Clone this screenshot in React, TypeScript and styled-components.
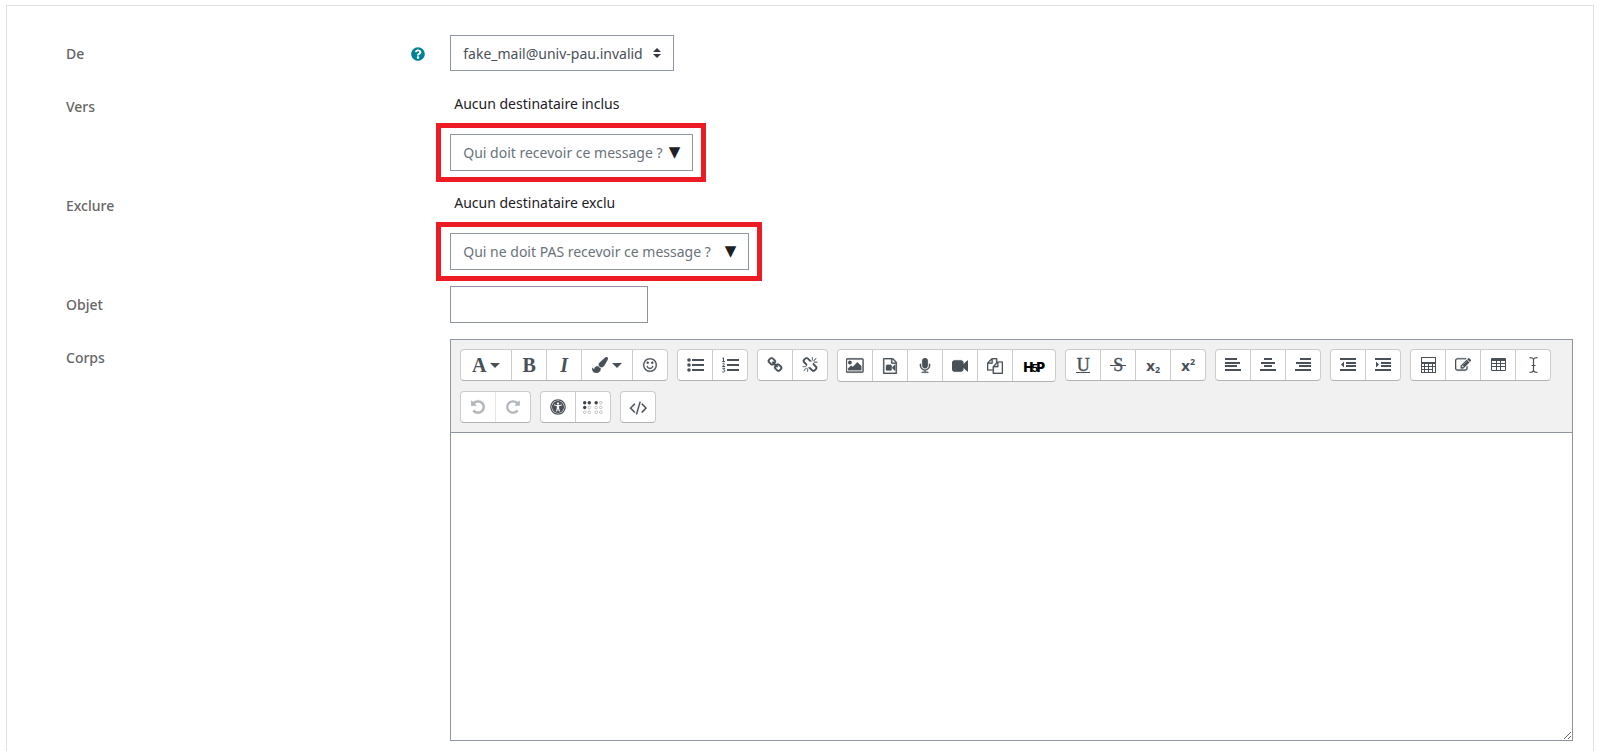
import React from "react";
import styled, { createGlobalStyle } from "styled-components";
import { FaQuestionCircle, FaUniversalAccess } from "react-icons/fa";

const GlobalStyle = createGlobalStyle`
  *, *::before, *::after { box-sizing: border-box; }
  body {
    margin: 0;
    background: #fff;
    color: #1d2125;
    font-family: "Noto Sans", "Open Sans", sans-serif;
    font-size: 14px;
    line-height: 22px;
  }
  button, input, select, textarea { font: inherit; color: inherit; margin: 0; }
`;

const Page = styled.main`
  padding: 5px 6px 0;
`;

const Panel = styled.form`
  min-height: calc(100vh - 5px);
  border: 1px solid #dee2e6;
  border-bottom: 0;
  padding: 29px 5px 10px 44px;
`;

const Row = styled.div`
  display: grid;
  grid-template-columns: 1fr 3fr;
  margin-bottom: 16px;
`;

const LabelCell = styled.div`
  display: flex;
  justify-content: space-between;
  align-items: flex-start;
  padding: 8px 10px 0 15px;
`;

const Label = styled.label`
  color: #666;
  font-weight: 500;
`;

const HelpButton = styled.button`
  display: flex;
  padding: 4px 0;
  border: 0;
  background: none;
  color: #008196;
`;

const Field = styled.div`
  min-width: 0;
  padding: 0 15px;
`;

const Control = styled.div<{ $width: number; $marked?: boolean }>`
  position: relative;
  width: ${(p) => p.$width}px;
  height: 37px;
  &::after {
    content: "";
    display: ${(p) => (p.$marked ? "block" : "none")};
    position: absolute;
    inset: -11px -13px -11px -14px;
    border: 5px solid #ed1c24;
    pointer-events: none;
  }
`;

const Select = styled.select`
  appearance: none;
  width: 100%;
  height: 36px;
  padding: 2px 12px 0;
  border: 1px solid #8f959e;
  border-radius: 0;
  background: #fff;
  color: #495057;
`;

const TextInput = styled.input`
  width: 100%;
  height: 37px;
  padding: 0 12px;
  border: 1px solid #8f959e;
  border-radius: 0;
  background: #fff;
  &::placeholder { color: #6a737b; opacity: 1; }
`;

const SelectArrows = styled.svg`
  position: absolute;
  top: 13px;
  right: 13px;
  width: 8px;
  height: 10px;
  pointer-events: none;
`;

const DownArrow = styled.span`
  position: absolute;
  top: 7px;
  right: 13px;
  font-family: "DejaVu Sans", sans-serif;
  font-size: 15px;
  pointer-events: none;
`;

const Selection = styled.p`
  height: 46px;
  margin: 0;
  padding: 5px 4px 0;
`;

const Editor = styled.div`
  border: 1px solid #8f959e;
`;

const Toolbar = styled.div`
  display: flex;
  flex-wrap: wrap;
  align-items: flex-start;
  gap: 9px;
  padding: 9px;
  background: #f1f1f1;
  border-bottom: 1px solid #8f959e;
`;

const Group = styled.div`
  display: flex;
  border: 1px solid #ccc;
  border-bottom-color: #b3b3b3;
  border-radius: 4px;
  background: #fff;
  overflow: hidden;
`;

const ToolButton = styled.button<{ $width: number; $tall?: boolean }>`
  display: flex;
  align-items: center;
  justify-content: center;
  gap: 4px;
  width: ${(p) => p.$width}px;
  height: ${(p) => (p.$tall ? 31 : 30)}px;
  padding: 0;
  border: 0;
  border-right: 1px solid #ccc;
  background: none;
  color: #495057;
  svg { flex: none; }
  &:last-child { border-right: 0; width: ${(p) => p.$width - 1}px; }
  &:disabled { color: #b2b7bb; border-color: #e6e6e6; }
`;

const Letter = styled.span<{ $italic?: boolean }>`
  font-family: "Liberation Serif", serif;
  font-size: 20px;
  font-weight: bold;
  font-style: ${(p) => (p.$italic ? "italic" : "normal")};
`;

const LinedLetter = styled.span<{ $strike?: boolean }>`
  position: relative;
  width: 16px;
  font-family: "Liberation Serif", serif;
  font-size: 18px;
  line-height: 20px;
  -webkit-text-stroke: 0.4px currentColor;
  text-align: center;
  &::after {
    content: "";
    position: absolute;
    right: ${(p) => (p.$strike ? 0 : 1)}px;
    left: ${(p) => (p.$strike ? 0 : 1)}px;
    bottom: ${(p) => (p.$strike ? 9 : 2)}px;
    height: 1px;
    background: currentColor;
  }
`;

const Script = styled.span`
  font-weight: bold;
  font-size: 15px;
  line-height: 16px;
  sub, sup { font-size: 9px; line-height: 0; }
  sub { vertical-align: -2px; }
  sup { vertical-align: 6px; }
`;

const Brand = styled.span`
  display: flex;
  align-items: baseline;
  padding-top: 3px;
  color: #000;
  font-family: Inter, sans-serif;
  font-size: 13px;
  font-weight: 900;
`;

const BrandDigit = styled.span`
  margin: 0 -2px;
  font-size: 11px;
  font-weight: 700;
`;

const Body = styled.textarea`
  display: block;
  width: 100%;
  height: 307px;
  padding: 8px;
  border: 0;
  outline: 0;
  resize: vertical;
`;

const paths = {
  brush:
    "M1615 0q70 0 122.5 46.5t52.5 116.5q0 63-45 151-332 629-465 752-97 91-218 91-126 0-216.5-92.5t-90.5-219.5q0-128 92-212l638-579q59-54 130-54zm-909 1034q39 76 106.5 130t150.5 76l1 71q4 213-129.5 347t-348.5 134q-123 0-218-46.5t-152.5-127.5-86.5-183-29-220q7 5 41 30t62 44.5 59 36.5 46 17q41 0 55-37 25-66 57.5-112.5t69.5-76 88-47.5 103-25.5 125-10.5z",
  smile:
    "M1262 1075q-37 121-138 195t-228 74-228-74-138-195q-8-25 4-48.5t38-31.5q25-8 48.5 4t31.5 38q25 80 92.5 129.5t151.5 49.5 151.5-49.5 92.5-129.5q8-26 32-38t49-4 37 31.5 4 48.5zm-494-435q0 53-37.5 90.5t-90.5 37.5-90.5-37.5-37.5-90.5 37.5-90.5 90.5-37.5 90.5 37.5 37.5 90.5zm512 0q0 53-37.5 90.5t-90.5 37.5-90.5-37.5-37.5-90.5 37.5-90.5 90.5-37.5 90.5 37.5 37.5 90.5zm256 256q0-130-51-248.5t-136.5-204-204-136.5-248.5-51-248.5 51-204 136.5-136.5 204-51 248.5 51 248.5 136.5 204 204 136.5 248.5 51 248.5-51 204-136.5 136.5-204 51-248.5zm128 0q0 209-103 385.5t-279.5 279.5-385.5 103-385.5-103-279.5-279.5-103-385.5 103-385.5 279.5-279.5 385.5-103 385.5 103 279.5 279.5 103 385.5z",
  link:
    "M1520 1216q0-40-28-68l-208-208q-28-28-68-28-42 0-72 32 3 3 19 18.5t21.5 21.5 15 19 13 25.5 3.5 27.5q0 40-28 68t-68 28q-15 0-27.5-3.5t-25.5-13-19-15-21.5-21.5-18.5-19q-33 31-33 73 0 40 28 68l206 207q27 27 68 27 40 0 68-26l147-146q28-28 28-67zm-703-705q0-40-28-68l-206-207q-28-28-68-28-39 0-68 27l-147 146q-28 28-28 67 0 40 28 68l208 208q27 27 68 27 42 0 72-31-3-3-19-18.5t-21.5-21.5-15-19-13-25.5-3.5-27.5q0-40 28-68t68-28q15 0 27.5 3.5t25.5 13 19 15 21.5 21.5 18.5 19q33-31 33-73zm895 705q0 120-85 203l-147 146q-83 83-203 83-121 0-204-85l-206-207q-83-83-83-203 0-123 88-209l-88-88q-86 88-208 88-120 0-204-84l-208-208q-84-84-84-204t85-203l147-146q83-83 203-83 121 0 204 85l206 207q83 83 83 203 0 123-88 209l88 88q86-88 208-88 120 0 204 84l208 208q84 84 84 204z",
  unlink:
    "M503 1271l-256 256q-10 9-23 9-12 0-23-9-9-10-9-23t9-23l256-256q10-9 23-9t23 9q9 10 9 23t-9 23zm169 41v320q0 14-9 23t-23 9-23-9-9-23v-320q0-14 9-23t23-9 23 9 9 23zm-224-224q0 14-9 23t-23 9h-320q-14 0-23-9t-9-23 9-23 23-9h320q14 0 23 9t9 23zm1264 128q0 120-85 203l-147 146q-83 83-203 83-121 0-204-85l-334-335q-21-21-42-56l239-18 273 274q28 28 68 27.5t68-27.5l147-146q28-28 28-67 0-40-28-68l-274-275 18-239q35 21 56 42l336 336q84 86 84 204zm-617-724l-239 18-273-274q-28-28-68-28-39 0-68 27l-147 146q-28 28-28 67 0 40 28 68l274 274-18 240q-35-21-56-42l-336-336q-84-86-84-204 0-120 85-203l147-146q83-83 203-83 121 0 204 85l334 335q21 21 42 56zm633 84q0 14-9 23t-23 9h-320q-14 0-23-9t-9-23 9-23 23-9h320q14 0 23 9t9 23zm-544-544v320q0 14-9 23t-23 9-23-9-9-23v-320q0-14 9-23t23-9 23 9 9 23zm407 151l-256 256q-11 9-23 9t-23-9q-9-10-9-23t9-23l256-256q10-9 23-9t23 9q9 10 9 23t-9 23z",
  image:
    "M576 576q0 80-56 136t-136 56-136-56-56-136 56-136 136-56 136 56 56 136zm1024 384v448h-1408v-192l320-320 160 160 512-512zm96-704h-1600q-13 0-22.5 9.5t-9.5 22.5v1216q0 13 9.5 22.5t22.5 9.5h1600q13 0 22.5-9.5t9.5-22.5v-1216q0-13-9.5-22.5t-22.5-9.5zm160 32v1216q0 66-47 113t-113 47h-1600q-66 0-113-47t-47-113v-1216q0-66 47-113t113-47h1600q66 0 113 47t47 113z",
  media:
    "M1596 380q28 28 48 76t20 88v1152q0 40-28 68t-68 28h-1344q-40 0-68-28t-28-68v-1600q0-40 28-68t68-28h896q40 0 88 20t76 48zm-444-244v376h376q-10-29-22-41l-313-313q-12-12-41-22zm384 1528v-1024h-416q-40 0-68-28t-28-68v-416h-768v1536h1280zm-576-896q52 0 90 38t38 90v384q0 52-38 90t-90 38h-384q-52 0-90-38t-38-90v-384q0-52 38-90t90-38h384zm492 2q20 8 20 30v576q0 22-20 30-8 2-12 2-14 0-23-9l-265-266v-90l265-266q9-9 23-9 4 0 12 2z",
  microphone:
    "M1472 704v128q0 221-147.5 384.5t-364.5 187.5v132h256q26 0 45 19t19 45-19 45-45 19h-640q-26 0-45-19t-19-45 19-45 45-19h256v-132q-217-24-364.5-187.5t-147.5-384.5v-128q0-26 19-45t45-19 45 19 19 45v128q0 185 131.5 316.5t316.5 131.5 316.5-131.5 131.5-316.5v-128q0-26 19-45t45-19 45 19 19 45zm-256-384v512q0 132-94 226t-226 94-226-94-94-226v-512q0-132 94-226t226-94 226 94 94 226z",
  video:
    "M1792 352v1088q0 42-39 59-13 5-25 5-27 0-45-19l-403-403v166q0 119-84.5 203.5t-203.5 84.5h-704q-119 0-203.5-84.5t-84.5-203.5v-704q0-119 84.5-203.5t203.5-84.5h704q119 0 203.5 84.5t84.5 203.5v165l403-402q18-19 45-19 12 0 25 5 39 17 39 59z",
  files:
    "M1696 384q40 0 68 28t28 68v1216q0 40-28 68t-68 28h-960q-40 0-68-28t-28-68v-288h-544q-40 0-68-28t-28-68v-672q0-40 20-88t48-76l408-408q28-28 76-48t88-20h416q40 0 68 28t28 68v328q68-40 128-40h416zm-544 213l-299 299h299v-299zm-640-384l-299 299h299v-299zm196 647l316-316v-416h-384v416q0 40-28 68t-68 28h-416v640h512v-256q0-40 20-88t48-76zm956 804v-1152h-384v416q0 40-28 68t-68 28h-416v640h896z",
  edit:
    "M888 1184l116-116-152-152-116 116v56h96v96h56zm440-720q-16-16-33 1l-350 350q-17 17-1 33t33-1l350-350q17-17 1-33zm80 594v190q0 119-84.5 203.5t-203.5 84.5h-832q-119 0-203.5-84.5t-84.5-203.5v-832q0-119 84.5-203.5t203.5-84.5h832q63 0 117 25 15 7 18 23 3 17-9 29l-49 49q-14 14-32 8-23-6-45-6h-832q-66 0-113 47t-47 113v832q0 66 47 113t113 47h832q66 0 113-47t47-113v-126q0-13 9-22l64-64q15-15 35-7t20 29zm-96-738l288 288-672 672h-288v-288zm444 132l-92 92-288-288 92-92q28-28 68-28t68 28l152 152q28 28 28 68t-28 68z",
  undo:
    "M1664 896q0 156-61 298t-164 245-245 164-298 61q-172 0-327-72.5t-264-204.5q-7-10-6.5-22.5t8.5-20.5l137-138q10-9 25-9 16 2 23 12 73 95 179 147t225 52q104 0 198.5-40.5t163.5-109.5 109.5-163.5 40.5-198.5-40.5-198.5-109.5-163.5-163.5-109.5-198.5-40.5q-98 0-188 35.5t-160 101.5l137 138q31 30 14 69-17 40-59 40h-448q-26 0-45-19t-19-45v-448q0-42 40-59 39-17 69 14l130 129q107-101 244.5-156.5t284.5-55.5q156 0 298 61t245 164 164 245 61 298z",
  code:
    "M617 1399l-50 50q-10 10-23 10t-23-10l-466-466q-10-10-10-23t10-23l466-466q10-10 23-10t23 10l50 50q10 10 10 23t-10 23l-393 393 393 393q10 10 10 23t-10 23zm591-1067l-373 1291q-4 13-15.5 19.5t-23.5 2.5l-62-17q-13-4-19.5-15.5t-2.5-24.5l373-1291q4-13 15.5-19.5t23.5-2.5l62 17q13 4 19.5 15.5t2.5 24.5zm657 651l-466 466q-10 10-23 10t-23-10l-50-50q-10-10-10-23t10-23l393-393-393-393q-10-10-10-23t10-23l50-50q10-10 23-10t23 10l466 466q10 10 10 23t-10 23z",
};

/* The hairline stroke gives the small icons the weight of the toolbar letters. */
const Glyph = ({ name, wide }: { name: keyof typeof paths; wide?: boolean }) => (
  <svg
    width={wide ? 18 : 16}
    height={wide ? 17 : 16}
    viewBox={wide ? "-32 0 1920 1792" : "0 0 1792 1792"}
    fill="currentColor"
    stroke="currentColor"
    strokeWidth="30"
    aria-hidden="true"
  >
    <path d={paths[name]} />
  </svg>
);

/* Shapes on a 16px grid, built from rectangles so that edges stay crisp. */
const Grid = ({ d, width = 16 }: { d: string; width?: number }) => (
  <svg width={width} height="16" viewBox={`0 0 ${width} 16`} fill="currentColor" fillRule="evenodd" aria-hidden="true">
    <path d={d} />
  </svg>
);

const Caret = () => (
  <svg width="10" height="5" viewBox="0 0 10 5" fill="currentColor" aria-hidden="true">
    <path d="M0 0h10L5 5z" />
  </svg>
);

const Redo = () => (
  <svg width="16" height="16" viewBox="0 0 1792 1792" fill="currentColor" aria-hidden="true">
    <path transform="matrix(-1 0 0 1 1792 0)" d={paths.undo} />
  </svg>
);

const BulletList = () => (
  <svg width="17" height="16" viewBox="0 0 17 16" fill="currentColor" aria-hidden="true">
    <circle cx="2" cy="3" r="1.800" />
    <circle cx="2" cy="8" r="1.800" />
    <circle cx="2" cy="13" r="1.800" />
    <path d="M5 2h12v2H5zM5 7h12v2H5zM5 12h12v2H5z" />
  </svg>
);

const NumberedList = () => (
  <svg width="17" height="16" viewBox="0 0 17 16" fill="none" stroke="currentColor" aria-hidden="true">
    <path d="M5 3h12M5 8h12M5 13h12" strokeWidth="2" />
    <path d="M.5 1.500l1-.7V4.500M.3 4.500h2.700M.5 6.700c1-1 2.400-.2 1.600.8L.5 9.500h2.600M.4 11.300h2.400l-1.100 1.500c1.800 0 1.600 2.700-1.400 2.200" strokeWidth="1" />
  </svg>
);

const Cursor = () => (
  <svg width="9" height="16" viewBox="0 0 9 16" fill="none" stroke="currentColor" aria-hidden="true">
    <path d="M.5.6C3 .6 4.500 1 4.500 3v10c0 2-1.500 2.400-4 2.400M8.500.6c-2.500 0-4 .4-4 2.400v10c0 2 1.500 2.400 4 2.400M2.500 8.500h4" strokeWidth="1.200" />
  </svg>
);

const brailleCells = [
  [1.7, 1.7, 1], [6.3, 1.7, 1], [1.7, 6.5, 1], [6.3, 6.5, 0], [1.7, 11.3, 0], [6.3, 11.3, 0],
  [13.2, 1.7, 1], [17.8, 1.7, 0], [13.2, 6.5, 0], [17.8, 6.5, 0], [13.2, 11.3, 0], [17.8, 11.3, 0],
];

const Braille = () => (
  <svg width="20" height="13" viewBox="0 0 20 13" aria-hidden="true">
    {brailleCells.map(([x, y, on]) => (
      <circle
        key={`${x}-${y}`}
        cx={x}
        cy={y}
        r={on ? 1.7 : 1.3}
        fill={on ? "#3c4248" : "none"}
        stroke={on ? "none" : "#b0b4b8"}
        strokeWidth=".8"
      />
    ))}
  </svg>
);

type Tool = { label: string; icon: React.ReactNode; width?: number; tall?: boolean; disabled?: boolean };

const groups: Tool[][] = [
  [
    { label: "Styles de paragraphe", icon: <><Letter>A</Letter><Caret /></>, width: 51 },
    { label: "Gras", icon: <Letter>B</Letter> },
    { label: "Italique", icon: <Letter $italic>I</Letter> },
    { label: "Couleur", icon: <><Glyph name="brush" /><Caret /></>, width: 51 },
    { label: "Emoji", icon: <Glyph name="smile" /> },
  ],
  [
    { label: "Liste à puces", icon: <BulletList /> },
    { label: "Liste numérotée", icon: <NumberedList /> },
  ],
  [
    { label: "Lien", icon: <Glyph name="link" /> },
    { label: "Supprimer le lien", icon: <Glyph name="unlink" /> },
  ],
  [
    { label: "Image", icon: <Glyph name="image" wide />, tall: true },
    { label: "Média", icon: <Glyph name="media" />, tall: true },
    { label: "Enregistrer audio", icon: <Glyph name="microphone" />, tall: true },
    { label: "Enregistrer vidéo", icon: <Glyph name="video" />, tall: true },
    { label: "Gérer les fichiers", icon: <Glyph name="files" />, tall: true },
    { label: "Insérer H5P", icon: <Brand>H<BrandDigit>5</BrandDigit>P</Brand>, width: 43, tall: true },
  ],
  [
    { label: "Souligné", icon: <LinedLetter>U</LinedLetter> },
    { label: "Barré", icon: <LinedLetter $strike>S</LinedLetter> },
    { label: "Indice", icon: <Script>x<sub>2</sub></Script> },
    { label: "Exposant", icon: <Script>x<sup>2</sup></Script> },
  ],
  [
    { label: "Aligner à gauche", icon: <Grid d="M0 1h12v2H0zM0 5h15v2H0zM0 8h12v2H0zM0 12h16v2H0z" /> },
    { label: "Centrer", icon: <Grid d="M4 1h8v2H4zM1 5h14v2H1zM4 8h8v2H4zM0 12h16v2H0z" /> },
    { label: "Aligner à droite", icon: <Grid d="M5 1h11v2H5zM1 5h15v2H1zM4 8h12v2H4zM0 12h16v2H0z" /> },
  ],
  [
    { label: "Diminuer le retrait", icon: <Grid d="M0 1h16v2H0zM6 5h10v2H6zM6 8h10v2H6zM0 12h16v2H0zM4 4.500v6L1 7.500z" /> },
    { label: "Augmenter le retrait", icon: <Grid d="M0 1h16v2H0zM6 5h10v2H6zM6 8h10v2H6zM0 12h16v2H0zM1 4.500v6l3-3z" /> },
  ],
  [
    {
      label: "Équation",
      icon: <Grid width={15} d="M0 0h15v16H0zM1 1v4h13V1zM1 7v2h2V7zM4 7v2h3V7zM8 7v2h3V7zM12 7v2h2V7zM1 10v2h2v-2zM4 10v2h3v-2zM8 10v2h3v-2zM12 10v5h2v-5zM1 13v2h2v-2zM4 13v2h3v-2zM8 13v2h3v-2z" />,
    },
    { label: "Caractère", icon: <Glyph name="edit" /> },
    {
      label: "Tableau",
      icon: <Grid width={15} d="M1 1h13a1 1 0 0 1 1 1v11a1 1 0 0 1-1 1H1a1 1 0 0 1-1-1V2a1 1 0 0 1 1-1zM1 4v2h4V4zM6 4v2h3V4zM10 4v2h4V4zM1 7v2h4V7zM6 7v2h3V7zM10 7v2h4V7zM1 10v3h4v-3zM6 10v3h3v-3zM10 10v3h4v-3z" />,
    },
    { label: "Effacer la mise en forme", icon: <Cursor /> },
  ],
  [
    { label: "Annuler", icon: <Glyph name="undo" />, disabled: true },
    { label: "Rétablir", icon: <Redo />, disabled: true },
  ],
  [
    { label: "Vérificateur d'accessibilité", icon: <FaUniversalAccess size={16} /> },
    { label: "Aide lecteur d'écran", icon: <Braille /> },
  ],
  [{ label: "HTML", icon: <Glyph name="code" wide />, width: 35 }],
];

const App = () => (
  <>
    <GlobalStyle />
    <Page>
      <Panel>
        <Row>
          <LabelCell>
            <Label htmlFor="from">De</Label>
            <HelpButton type="button" aria-label="Aide sur De">
              <FaQuestionCircle size={14} />
            </HelpButton>
          </LabelCell>
          <Field>
            <Control $width={224}>
              <Select id="from">
                <option>fake_mail@univ-pau.invalid</option>
              </Select>
              <SelectArrows viewBox="0 0 8 10" fill="#343a40" aria-hidden="true">
                <path d="M4 0l4 4H0zM4 10L0 6h8z" />
              </SelectArrows>
            </Control>
          </Field>
        </Row>
        <Row>
          <LabelCell>
            <Label htmlFor="to">Vers</Label>
          </LabelCell>
          <Field>
            <Selection>Aucun destinataire inclus</Selection>
            <Control $width={243} $marked>
              <TextInput id="to" type="text" placeholder="Qui doit recevoir ce message ?" />
              <DownArrow aria-hidden="true">▼</DownArrow>
            </Control>
          </Field>
        </Row>
        <Row>
          <LabelCell>
            <Label htmlFor="exclude">Exclure</Label>
          </LabelCell>
          <Field>
            <Selection>Aucun destinataire exclu</Selection>
            <Control $width={299} $marked>
              <TextInput id="exclude" type="text" placeholder="Qui ne doit PAS recevoir ce message ?" />
              <DownArrow aria-hidden="true">▼</DownArrow>
            </Control>
          </Field>
        </Row>
        <Row>
          <LabelCell>
            <Label htmlFor="subject">Objet</Label>
          </LabelCell>
          <Field>
            <Control $width={198}>
              <TextInput id="subject" type="text" />
            </Control>
          </Field>
        </Row>
        <Row>
          <LabelCell>
            <Label htmlFor="body">Corps</Label>
          </LabelCell>
          <Field>
            <Editor>
              <Toolbar role="toolbar" aria-label="Éditeur">
                {groups.map((tools) => (
                  <Group key={tools[0].label}>
                    {tools.map((tool) => (
                      <ToolButton
                        key={tool.label}
                        type="button"
                        aria-label={tool.label}
                        disabled={tool.disabled}
                        $width={tool.width ?? 35}
                        $tall={tool.tall}
                      >
                        {tool.icon}
                      </ToolButton>
                    ))}
                  </Group>
                ))}
              </Toolbar>
              <Body id="body" />
            </Editor>
          </Field>
        </Row>
      </Panel>
    </Page>
  </>
);

export default App;
